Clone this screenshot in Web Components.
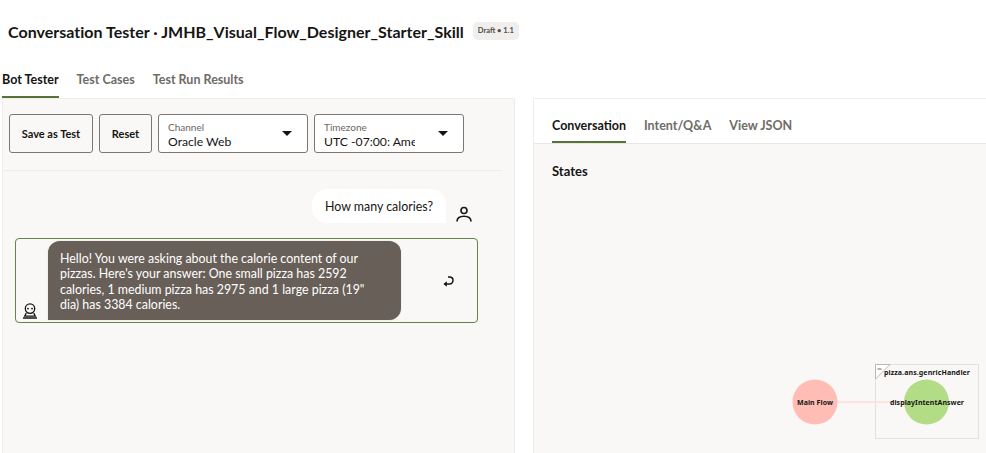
<!DOCTYPE html>
<html><head><meta charset="utf-8">
<style>
html,body{margin:0;padding:0;background:#fff;height:453px;overflow:hidden}
body{font-family:"Lato","Noto Sans",sans-serif;color:#161513}
</style></head><body>
<tester-page></tester-page>
<template id="t-page"><style>
:host{display:flex;flex-direction:column;width:986px;height:453px;overflow:hidden}
.head{display:flex;align-items:center;gap:9px;height:62px;padding-left:8px;flex:none}
h1{margin:0;font-size:16px;font-weight:700;letter-spacing:.015px;white-space:nowrap}
.pill{font-size:7.5px;font-weight:700;color:#4f4c48;background:#f1efed;border-radius:5px;padding:0 5px;line-height:18px;height:18px}
.tabs{padding-left:2px;flex:none}
.cols{display:flex;flex:1;min-height:0;padding-left:2px;gap:18px}
.left{width:513px;flex:none;background:#f9f8f6;border:1px solid #efedea;border-bottom:0;box-sizing:border-box;padding:15px 12px 0 6px}
.tools{display:flex;gap:6px;height:39px}
.rule{height:1px;background:#efedea;margin:17px 0 0 -6px}
.right{flex:1;display:flex;flex-direction:column;border-left:1px solid #efedea;border-top:1px solid #efedea;min-width:0}
.rt{height:45px;box-sizing:border-box;border-bottom:1px solid #e9e7e4;padding-left:18px;background:#fff;flex:none}
.rb{flex:1;background:#f9f8f6;padding-left:18px;position:relative}
h2{margin:0;font-size:13px;font-weight:700;padding-top:19px;line-height:17px}
</style>
<div class="head"><h1>Conversation Tester · JMHB_Visual_Flow_Designer_Starter_Skill</h1><span class="pill">Draft • 1.1</span></div>
<tab-bar class="tabs" h="36" pt="0"><tab-item active>Bot Tester</tab-item><tab-item>Test Cases</tab-item><tab-item>Test Run Results</tab-item></tab-bar>
<div class="cols">
<section class="left">
<div class="tools"><tool-button w="84">Save as Test</tool-button><tool-button w="53">Reset</tool-button><select-box label="Channel" value="Oracle Web"></select-box><select-box label="Timezone" value="UTC -07:00: Ame"></select-box></div>
<div class="rule"></div>
<chat-log></chat-log>
</section>
<section class="right">
<div class="rt"><tab-bar h="44" pt="10"><tab-item active>Conversation</tab-item><tab-item>Intent/Q&amp;A</tab-item><tab-item>View JSON</tab-item></tab-bar></div>
<div class="rb"><h2>States</h2><flow-diagram></flow-diagram></div>
</section>
</div>
</template>

<template id="t-tabs"><style>
:host{display:flex;gap:18px;align-items:stretch;box-sizing:border-box}
</style><slot></slot></template>

<template id="t-tab"><style>
:host{display:flex;align-items:center;font-size:12.5px;font-weight:700;color:#6f6b67;border-bottom:2px solid transparent;white-space:nowrap;box-sizing:border-box}
:host([active]){color:#161513;border-bottom-color:#56743a}
</style><slot></slot></template>

<template id="t-btn"><style>
:host{display:flex;align-items:center;justify-content:center;box-sizing:border-box;height:39px;border:1px solid #7b7873;border-radius:3px;background:#f9f8f6;font-size:11px;font-weight:700;color:#161513;white-space:nowrap}
</style><slot></slot></template>

<template id="t-sel"><style>
:host{display:flex;align-items:center;box-sizing:border-box;width:150px;height:39px;border:1px solid #7b7873;border-radius:3px;background:#fff;padding:0 15px 0 9px;gap:23px}
.txt{flex:1;min-width:0;overflow:hidden;padding-top:2px}
.l{font-size:10px;color:#6b6763;line-height:12px;white-space:nowrap}
.v{font-size:12.2px;color:#161513;line-height:15px;margin-top:1px;white-space:nowrap}
svg{flex:none;display:block}
</style><div class="txt"><div class="l"></div><div class="v"></div></div><svg width="10" height="5" viewBox="0 0 10 5"><path d="M0 0h10L5 5z" fill="#161513"/></svg></template>

<template id="t-chat"><style>
:host{display:block;position:relative;height:200px}
.user{display:flex;justify-content:flex-end;align-items:flex-end;padding-top:18px;padding-right:30px;gap:10px}
.ub{background:#fff;border-radius:15px 15px 0 15px;font-size:12.4px;line-height:16px;padding:10px 13px 8px;white-space:nowrap}
.sel{display:flex;align-items:flex-end;margin:15px 0 0 6px;width:463px;height:85px;box-sizing:border-box;border:1px solid #65834a;border-radius:4px;padding:2px 0 2px 6px}
.bot{flex:none;margin-bottom:1px;display:block}
.bb{margin-left:10px;width:353px;height:100%;box-sizing:border-box;background:#695f59;color:#fff;font-size:12.4px;line-height:15.3px;padding:10px 28px 10px 12px;border-radius:12px 12px 12px 0;box-shadow:0 0 1px #aaa}
.reply{margin:3px 0 0 41px;display:block;align-self:center}
</style>
<div class="user"><div class="ub">How many calories?</div><svg width="16" height="17" viewBox="0 0 16 17" fill="none" stroke="#161513" stroke-width="1.6"><circle cx="8" cy="4.500" r="3"/><path d="M1 15.500c0-3.500 3-5.300 7-5.300s7 1.800 7 5.300"/></svg></div>
<div class="sel"><svg class="bot" width="16" height="16" viewBox="0 0 16 16" fill="none" stroke="#161513" stroke-width="1.300"><circle cx="8" cy="5.600" r="4.700"/><path d="M4.300 10 2.700 13.200h10.600L11.700 10"/><path d="M1 15h14" stroke-width="1.500"/><circle cx="6" cy="5.600" r=".9" fill="#161513" stroke="none"/><circle cx="10" cy="5.600" r=".9" fill="#161513" stroke="none"/></svg>
<div class="bb">Hello! You were asking about the calorie content of our pizzas. Here's your answer: One small pizza has 2592 calories, 1 medium pizza has 2975 and 1 large pizza (19" dia) has 3384 calories.</div>
<svg class="reply" width="12" height="12" viewBox="0 0 12 12" fill="none" stroke="#161513" stroke-width="1.500"><path d="M6 1h1.500c2 0 3.500 1.300 3.500 3.300S9.500 8 7.500 8H2.500"/><path d="M4.800 5.200 1.500 8l3.300 2.800z" fill="#161513" stroke="none"/></svg>
</div></template>

<template id="t-flow"><style>
:host{display:block;position:absolute;left:0;top:0;right:0;bottom:0;pointer-events:none}
svg{position:absolute;left:0;top:0}
text{font-family:"Noto Sans",sans-serif;font-size:7px;font-weight:700;fill:#161513;text-anchor:middle}
</style>
<svg width="452" height="309" viewBox="534 144 452 309">
<rect x="875.500" y="364.500" width="103" height="74" fill="none" stroke="#dfe1e6" stroke-width="1"/>
<path d="M875.500 364.500h14.500l-14.500 14.500z" fill="#fff" stroke="#a9a9a9" stroke-width=".8"/>
<path d="M877.500 369h4" stroke="#444" stroke-width=".8"/>
<circle cx="815" cy="402" r="22.500" fill="#ffbdb5"/>
<circle cx="926.500" cy="402" r="22.500" fill="#b3dc87"/>
<path d="M837.500 402H904" stroke="#ffdcd8" stroke-width="1.500"/>
<text x="815" y="404.500" textLength="36">Main Flow</text>
<text x="927" y="404.500" textLength="74">displayIntentAnswer</text>
<text x="927" y="374.500" textLength="86">pizza.ans.genricHandler</text>
</svg></template>

<script>
function def(name, tid, init){
  customElements.define(name, class extends HTMLElement{
    constructor(){super();this.attachShadow({mode:"open"}).appendChild(document.getElementById(tid).content.cloneNode(true));}
    connectedCallback(){ if(init) init(this); }
  });
}
def("tab-bar","t-tabs",e=>{ e.style.height=e.getAttribute("h")+"px"; e.style.paddingTop=(e.getAttribute("pt")||0)+"px"; });
def("tab-item","t-tab");
def("tool-button","t-btn",e=>{e.style.width=e.getAttribute("w")+"px"});
def("select-box","t-sel",e=>{e.shadowRoot.querySelector(".l").textContent=e.getAttribute("label");e.shadowRoot.querySelector(".v").textContent=e.getAttribute("value");});
def("chat-log","t-chat");
def("flow-diagram","t-flow");
def("tester-page","t-page");
</script>
</body></html>
